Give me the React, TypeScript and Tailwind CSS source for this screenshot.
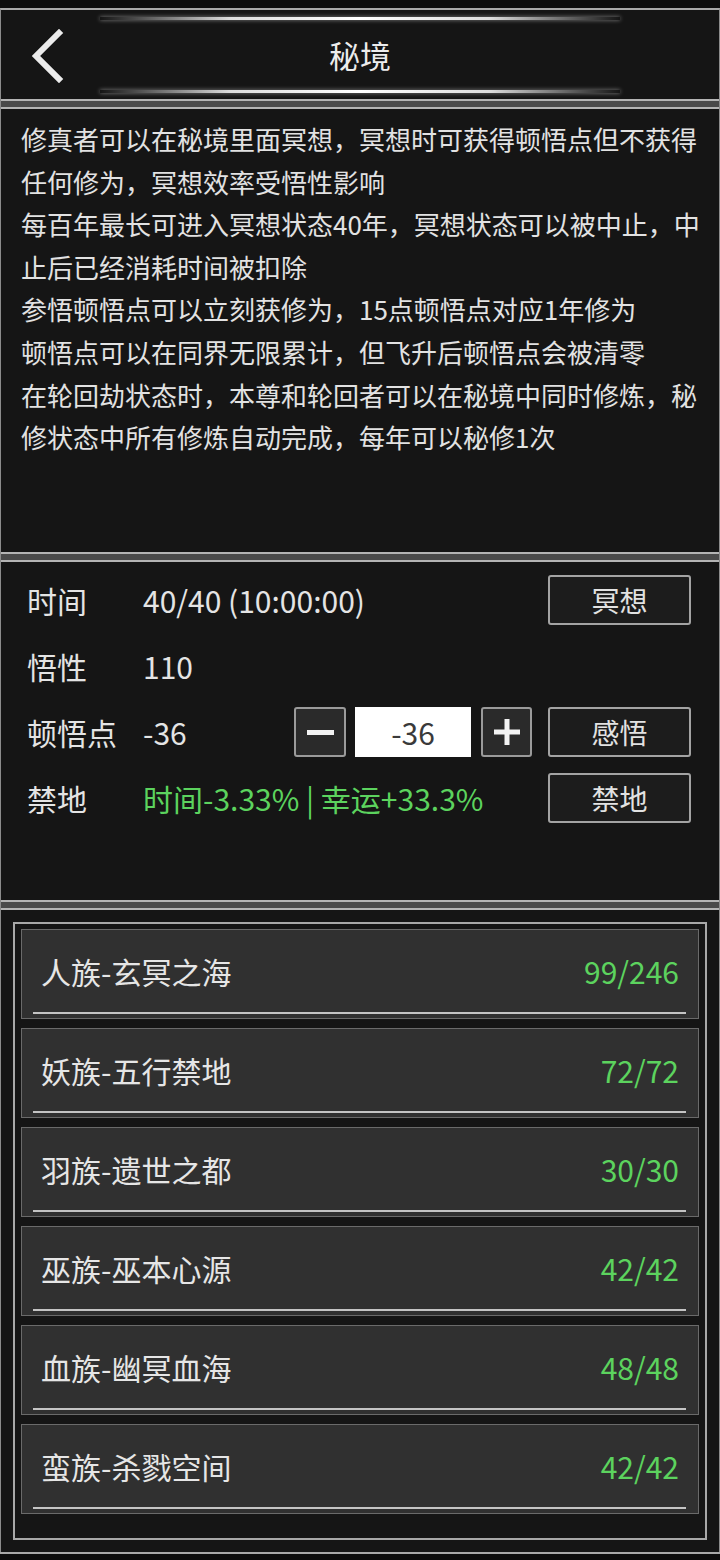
import React from 'react';

const FONT = { fontFamily: '"Noto Sans CJK SC", "Noto Sans", sans-serif' };

const intro = [
  '修真者可以在秘境里面冥想，冥想时可获得顿悟点但不获得',
  '任何修为，冥想效率受悟性影响',
  '每百年最长可进入冥想状态40年，冥想状态可以被中止，中',
  '止后已经消耗时间被扣除',
  '参悟顿悟点可以立刻获修为，15点顿悟点对应1年修为',
  '顿悟点可以在同界无限累计，但飞升后顿悟点会被清零',
  '在轮回劫状态时，本尊和轮回者可以在秘境中同时修炼，秘',
  '修状态中所有修炼自动完成，每年可以秘修1次',
];

const realms = [
  { name: '人族-玄冥之海', value: '99/246' },
  { name: '妖族-五行禁地', value: '72/72' },
  { name: '羽族-遗世之都', value: '30/30' },
  { name: '巫族-巫本心源', value: '42/42' },
  { name: '血族-幽冥血海', value: '48/48' },
  { name: '蛮族-杀戮空间', value: '42/42' },
];

const Separator = () => (
  <div className="h-[10px] border-y-2 border-[#b4b4b4] bg-[#4a4a4a]" />
);

const GlowLine = () => (
  <div className="mx-auto h-[3px] w-[520px] bg-[linear-gradient(90deg,rgba(255,255,255,0)_0%,rgba(255,255,255,0.85)_25%,#ffffff_50%,rgba(255,255,255,0.85)_75%,rgba(255,255,255,0)_100%)] shadow-[0_0_4px_rgba(255,255,255,0.5)]" />
);

const ActionButton = ({ label }: { label: string }) => (
  <button className="flex h-[50px] w-[143px] items-center justify-center rounded-[3px] border-2 border-[#a3a3a3] bg-[#1c1c1c] text-[28px] text-[#e2e2e2]">
    {label}
  </button>
);

const StatRow = ({ label, children }: { label: string; children: React.ReactNode }) => (
  <div className="flex h-[66px] items-center">
    <div className="w-[116px] text-[30px] text-[#e4e4e4]">{label}</div>
    {children}
  </div>
);

export default function App() {
  return (
    <div className="h-[1560px] w-[720px] bg-[#0c0c0c] pt-[8px]" style={FONT}>
      <div className="border-x border-t-2 border-[#8c8c8c] border-t-[#a8a8a8] bg-[#151515]">
        {/* Header */}
        <div className="relative h-[89px] pt-[7px]">
          <GlowLine />
          <div className="flex h-[70px] items-center justify-center text-[31px] text-[#ececec]">秘境</div>
          <GlowLine />
          <svg className="absolute left-[27px] top-[19px]" width="40" height="54" viewBox="0 0 40 54">
            <polyline points="31,4 8,27 31,50" fill="none" stroke="#ececec" strokeWidth="6" strokeLinecap="square" />
          </svg>
        </div>
        <Separator />

        {/* Intro text */}
        <div className="h-[443px] pl-[20px] pt-[9px] text-[26px] leading-[42.6px] text-[#e2e2e2]">
          {intro.map((line, i) => (
            <div key={i} className="whitespace-nowrap">{line}</div>
          ))}
        </div>
        <Separator />

        {/* Stats */}
        <div className="h-[338px] pl-[26px] pr-[28px] pt-[5px]">
          <StatRow label="时间">
            <div className="flex-1 text-[30px] text-[#e4e4e4]">40/40 (10:00:00)</div>
            <ActionButton label="冥想" />
          </StatRow>
          <StatRow label="悟性">
            <div className="flex-1 text-[30px] text-[#e4e4e4]">110</div>
          </StatRow>
          <StatRow label="顿悟点">
            <div className="flex-1 text-[30px] text-[#e4e4e4]">-36</div>
            <div className="mr-[16px] flex items-center">
              <button className="flex h-[50px] w-[52px] items-center justify-center rounded-[3px] border-2 border-[#9a9a9a] bg-[#2a2a2a]">
                <span className="block h-[5px] w-[27px] bg-[#f2f2f2]" />
              </button>
              <div className="ml-[9px] flex h-[50px] w-[116px] items-center justify-center bg-white text-[30px] text-[#3a3a3a]">-36</div>
              <button className="ml-[10px] flex h-[50px] w-[51px] items-center justify-center rounded-[3px] border-2 border-[#9a9a9a] bg-[#2a2a2a]">
                <svg width="28" height="28" viewBox="0 0 28 28">
                  <path d="M14 1v26M1 14h26" stroke="#f2f2f2" strokeWidth="5" />
                </svg>
              </button>
            </div>
            <ActionButton label="感悟" />
          </StatRow>
          <StatRow label="禁地">
            <div className="flex-1 text-[30px] text-[#5cd35e]">时间-3.33% | 幸运+33.3%</div>
            <ActionButton label="禁地" />
          </StatRow>
        </div>
        <Separator />

        {/* Realm list */}
        <div className="h-[642px] px-[12px] pt-[12px]">
          <div className="h-[618px] border-2 border-[#a8a8a8] px-[6px] pt-[5px]">
            <div className="flex flex-col gap-[9px]">
              {realms.map((r) => (
                <div key={r.name} className="relative flex h-[90px] items-center justify-between border border-[#6a6a6a] bg-[#303030] pb-[6px] pl-[19px] pr-[19px]">
                  <span className="text-[30px] text-[#e6e6e6]">{r.name}</span>
                  <span className="text-[30px] text-[#5cd35e]">{r.value}</span>
                  <div className="absolute bottom-[4px] left-[11px] right-[12px] h-[2px] bg-[#c4c4c4]" />
                </div>
              ))}
            </div>
          </div>
        </div>
      </div>
      <div className="h-[2px] bg-[#a8a8a8]" />
    </div>
  );
}
